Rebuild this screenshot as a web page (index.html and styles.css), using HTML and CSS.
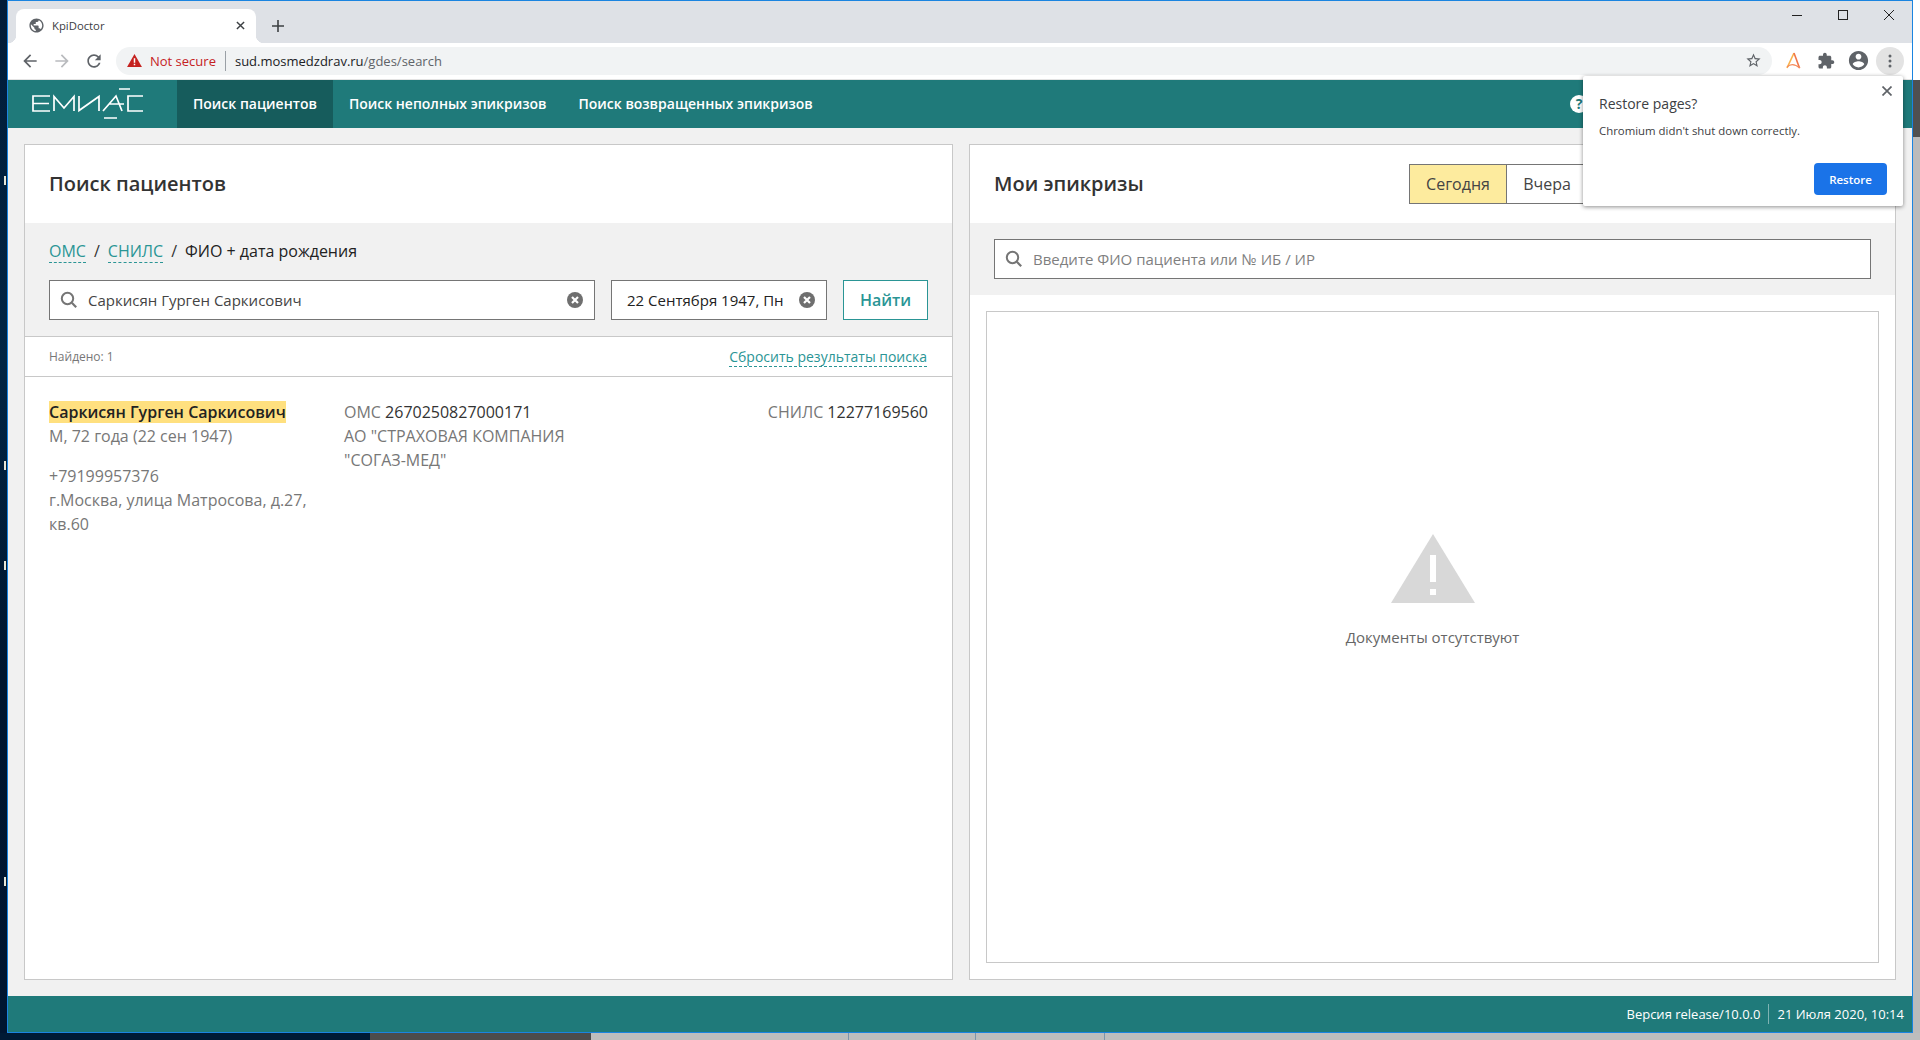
FILE: index.html
```html
<!DOCTYPE html>
<html lang="ru">
<head>
  <meta charset="UTF-8">
  <title>KpiDoctor</title>
  <link rel="stylesheet" href="styles.css">
</head>
<body>
  <svg class="defs" width="0" height="0">
    <symbol id="i-search" viewBox="0 0 20 20">
      <circle cx="8.5" cy="8.5" r="5.7" fill="none" stroke="#757575" stroke-width="2"/>
      <path d="M12.8 12.8l4.4 4.4" stroke="#757575" stroke-width="2.2" fill="none"/>
    </symbol>
    <symbol id="i-clear" viewBox="0 0 16 16">
      <circle cx="8" cy="8" r="8" fill="#6f6f6f"/>
      <path d="M5 5l6 6M11 5l-6 6" stroke="#fff" stroke-width="2.2" fill="none"/>
    </symbol>
  </svg>

  <div class="screen">
    <div class="desk-left">
      <span class="mark mark-a"></span>
      <span class="mark mark-b"></span>
      <span class="mark mark-c"></span>
      <span class="mark mark-d"></span>
    </div>

    <div class="window">
      <!-- вкладки -->
      <div class="tabstrip">
        <div class="tab">
          <svg class="favicon" viewBox="0 0 24 24"><path fill="#5f6368" d="M12 2C6.48 2 2 6.48 2 12s4.48 10 10 10 10-4.48 10-10S17.52 2 12 2zm-1 17.93c-3.95-.49-7-3.85-7-7.93 0-.62.08-1.21.21-1.79L9 15v1c0 1.1.9 2 2 2v1.93zm6.9-2.54c-.26-.81-1-1.39-1.9-1.39h-1v-3c0-.55-.45-1-1-1H8v-2h2c.55 0 1-.45 1-1V7h2c1.1 0 2-.9 2-2v-.41c2.93 1.19 5 4.06 5 7.41 0 2.08-.8 3.97-2.1 5.39z"/></svg>
          <span class="tab-title">KpiDoctor</span>
          <svg class="tab-close" viewBox="0 0 10 10"><path d="M1 1l8 8M9 1l-8 8" stroke="#3c4043" stroke-width="1.6" fill="none"/></svg>
        </div>
        <svg class="new-tab" viewBox="0 0 12 12"><path d="M6 0v12M0 6h12" stroke="#3c4043" stroke-width="1.6" fill="none"/></svg>
        <div class="win-controls">
          <div class="win-btn"><svg width="10" height="10" viewBox="0 0 10 10"><path d="M0 5.5h10" stroke="#222" fill="none"/></svg></div>
          <div class="win-btn"><svg width="10" height="10" viewBox="0 0 10 10"><rect x=".5" y=".5" width="9" height="9" stroke="#222" fill="none"/></svg></div>
          <div class="win-btn"><svg width="10" height="10" viewBox="0 0 10 10"><path d="M0 0l10 10M10 0L0 10" stroke="#222" fill="none"/></svg></div>
        </div>
      </div>

      <!-- адресная строка -->
      <div class="toolbar">
        <div class="tool-btn"><svg width="20" height="20" viewBox="0 0 24 24"><path fill="#5f6368" d="M20 11H7.83l5.59-5.59L12 4l-8 8 8 8 1.41-1.41L7.83 13H20v-2z"/></svg></div>
        <div class="tool-btn"><svg width="20" height="20" viewBox="0 0 24 24"><path fill="#b9bbbe" d="M4 11h12.17l-5.59-5.59L12 4l8 8-8 8-1.41-1.41L16.17 13H4v-2z"/></svg></div>
        <div class="tool-btn"><svg width="20" height="20" viewBox="0 0 24 24"><path fill="#5f6368" d="M17.65 6.35C16.2 4.9 14.21 4 12 4c-4.42 0-7.99 3.58-7.99 8s3.57 8 7.99 8c3.73 0 6.84-2.55 7.73-6h-2.08c-.82 2.33-3.04 4-5.65 4-3.31 0-6-2.69-6-6s2.69-6 6-6c1.66 0 3.14.69 4.22 1.78L13 11h7V4l-2.35 2.35z"/></svg></div>
        <div class="omnibox">
          <svg class="warn" viewBox="0 0 16 14"><path fill="#c5221f" d="M8 0l8 14H0z"/><path fill="#fff" d="M7.2 4.5h1.6v5H7.2zM7.2 10.5h1.6v1.6H7.2z"/></svg>
          <span class="not-secure">Not secure</span>
          <span class="omni-sep"></span>
          <span class="url">sud.mosmedzdrav.ru<span class="url-path">/gdes/search</span></span>
          <svg class="star" viewBox="0 0 24 24"><path fill="#5f6368" d="M22 9.24l-7.19-.62L12 2 9.19 8.63 2 9.24l5.46 4.73L5.82 21 12 17.27 18.18 21l-1.63-7.03L22 9.24zM12 15.4l-3.76 2.27 1-4.28-3.32-2.88 4.38-.38L12 6.1l1.71 4.04 4.38.38-3.32 2.88 1 4.28L12 15.4z"/></svg>
        </div>
        <div class="tool-right">
          <div class="tool-btn">
            <svg width="18" height="20" viewBox="0 0 18 20">
              <path d="M2 17L9 2" stroke="#f9b24a" stroke-width="1.6" fill="none"/>
              <path d="M9 2l5.5 15" stroke="#f0764a" stroke-width="1.6" fill="none"/>
              <path d="M2 16c4-4 8-3 13 1" stroke="#f48a5a" stroke-width="1.4" fill="none"/>
            </svg>
          </div>
          <div class="tool-btn"><svg width="18" height="18" viewBox="0 0 24 24"><path fill="#5f6368" d="M20.5 11H19V7c0-1.1-.9-2-2-2h-4V3.5C13 2.12 11.88 1 10.5 1S8 2.12 8 3.5V5H4c-1.1 0-1.99.9-1.99 2v3.8H3.5c1.49 0 2.7 1.21 2.7 2.7s-1.21 2.7-2.7 2.7H2V20c0 1.1.9 2 2 2h3.8v-1.5c0-1.49 1.21-2.7 2.7-2.7 1.49 0 2.7 1.21 2.7 2.7V22H17c1.1 0 2-.9 2-2v-4h1.5c1.38 0 2.5-1.12 2.5-2.5S21.88 11 20.5 11z"/></svg></div>
          <div class="tool-btn"><svg width="23" height="23" viewBox="0 0 24 24"><path fill="#5f6368" d="M12 2C6.48 2 2 6.48 2 12s4.48 10 10 10 10-4.48 10-10S17.52 2 12 2zm0 3c1.66 0 3 1.34 3 3s-1.34 3-3 3-3-1.34-3-3 1.34-3 3-3zm0 14.2c-2.5 0-4.71-1.28-6-3.22.03-1.99 4-3.08 6-3.08 1.99 0 5.97 1.09 6 3.08-1.29 1.94-3.5 3.22-6 3.22z"/></svg></div>
          <div class="tool-btn menu-btn"><svg width="4" height="14" viewBox="0 0 4 14"><circle cx="2" cy="2" r="1.5" fill="#5f6368"/><circle cx="2" cy="7" r="1.5" fill="#5f6368"/><circle cx="2" cy="12" r="1.5" fill="#5f6368"/></svg></div>
        </div>
      </div>

      <!-- страница -->
      <div class="page">
        <header class="app-header">
          <div class="brand">
            <svg width="130" height="40" viewBox="0 0 130 40" fill="none" stroke="#fff" stroke-width="1.7">
              <path d="M26 12H9v15h17M9 19.500h16"/>
              <path d="M30 27V12.500L40 24l10-11.500V27"/>
              <path d="M55 12v14.500L75 12.500V27"/>
              <path d="M79 27l13-15 6 15M85 20h15"/>
              <path d="M95 5h11M80 34h13"/>
              <path d="M119 12h-15v15h15"/>
            </svg>
          </div>
          <nav class="app-nav">
            <a class="nav-item active">Поиск пациентов</a>
            <a class="nav-item">Поиск неполных эпикризов</a>
            <a class="nav-item">Поиск возвращенных эпикризов</a>
          </nav>
          <span class="help">?</span>
        </header>

        <main class="columns">
          <section class="panel">
            <div class="panel-head">
              <h2>Поиск пациентов</h2>
            </div>
            <div class="search-block">
              <div class="crumbs">
                <a class="dash-link">ОМС</a>
                <span class="crumb-sep">/</span>
                <a class="dash-link">СНИЛС</a>
                <span class="crumb-sep">/</span>
                <span class="crumb-current">ФИО + дата рождения</span>
              </div>
              <div class="search-row">
                <div class="field field-name">
                  <svg class="field-icon"><use href="#i-search"/></svg>
                  <input class="field-input" value="Саркисян Гурген Саркисович" readonly>
                  <svg class="field-clear"><use href="#i-clear"/></svg>
                </div>
                <div class="field field-date">
                  <input class="field-input" value="22 Сентября 1947, Пн" readonly>
                  <svg class="field-clear"><use href="#i-clear"/></svg>
                </div>
                <button class="find-btn">Найти</button>
              </div>
            </div>
            <div class="found-bar">
              <span class="found">Найдено: 1</span>
              <a class="dash-link reset">Сбросить результаты поиска</a>
            </div>
            <div class="patient">
              <div class="patient-main">
                <p><mark class="name">Саркисян Гурген Саркисович</mark></p>
                <p>М, 72 года (22 сен 1947)</p>
                <p class="gap-top">+79199957376</p>
                <p>г.Москва, улица Матросова, д.27, кв.60</p>
              </div>
              <div class="patient-oms">
                <p>ОМС <b>2670250827000171</b></p>
                <p>АО "СТРАХОВАЯ КОМПАНИЯ "СОГАЗ-МЕД"</p>
              </div>
              <div class="patient-snils">
                <p>СНИЛС <b>12277169560</b></p>
              </div>
            </div>
          </section>

          <section class="panel">
            <div class="panel-head">
              <h2>Мои эпикризы</h2>
              <div class="periods">
                <span class="period selected">Сегодня</span>
                <span class="period">Вчера</span>
              </div>
            </div>
            <div class="filter-block">
              <div class="field">
                <svg class="field-icon"><use href="#i-search"/></svg>
                <input class="field-input" placeholder="Введите ФИО пациента или № ИБ / ИР" readonly>
              </div>
            </div>
            <div class="docs">
              <svg class="docs-icon" width="84" height="70" viewBox="0 0 84 70">
                <path fill="#d8d8d8" d="M42 0l42 69H0z"/>
                <path fill="#fff" d="M39 21h6v27h-6zM39 55h6v6h-6z"/>
              </svg>
              <p class="docs-empty">Документы отсутствуют</p>
            </div>
          </section>
        </main>

        <footer class="app-footer">
          <span>Версия release/10.0.0</span>
          <span class="foot-sep"></span>
          <span>21 Июля 2020, 10:14</span>
        </footer>

        <div class="restore">
          <svg class="restore-close" width="10" height="10" viewBox="0 0 10 10"><path d="M.5.500l9 9M9.500.500l-9 9" stroke="#5f6368" stroke-width="1.700" fill="none"/></svg>
          <div class="restore-title">Restore pages?</div>
          <div class="restore-text">Chromium didn't shut down correctly.</div>
          <div class="restore-actions"><button class="restore-btn">Restore</button></div>
        </div>
      </div>
    </div>

    <div class="desk-right">
      <div class="dr-top"></div>
      <div class="dr-mid"></div>
      <div class="dr-low"></div>
    </div>
  </div>

  <div class="taskbar">
    <div class="tb-desk"></div>
    <div class="tb-dark"></div>
    <div class="tb-item tb-w1"></div>
    <div class="tb-item tb-w2"></div>
    <div class="tb-item tb-w3"></div>
    <div class="tb-item tb-rest"></div>
  </div>
</body>
</html>
```

FILE: styles.css
```css
* {
  box-sizing: border-box;
}

html, body {
  margin: 0;
  height: 1040px;
  overflow: hidden;
}

body {
  font-family: "Open Sans", "Noto Sans", sans-serif;
  font-size: 16px;
  color: #333;
  background-color: #001a35;
}

p, h2 {
  margin: 0;
}

.defs {
  position: absolute;
}

.screen {
  display: flex;
  height: 1033px;
}

/* полоски рабочего стола по краям окна */
.desk-left {
  position: relative;
  width: 7px;
  background: linear-gradient(180deg, #021c38 0%, #012544 35%, #00162f 65%, #001530 100%);
}

.mark {
  position: absolute;
  left: 4px;
  width: 2px;
  height: 9px;
  background-color: #e6e6d8;
}

.mark-a { top: 176px; }
.mark-b { top: 461px; }
.mark-c { top: 561px; }
.mark-d { top: 877px; }

.desk-right {
  display: flex;
  flex-direction: column;
  width: 7px;
}

.dr-top { height: 80px; background-color: #fff; }
.dr-mid { height: 57px; background-color: #505050; }
.dr-low { flex: 1; background-color: #bbb; }

.window {
  position: relative;
  display: flex;
  flex-direction: column;
  width: 1906px;
  border: 1px solid #1a84e0;
}

.tabstrip {
  display: flex;
  align-items: flex-end;
  height: 42px;
  padding-left: 8px;
  background-color: #dee1e6;
}

.tab {
  position: relative;
  display: flex;
  align-items: center;
  width: 240px;
  height: 34px;
  padding: 0 11px 1px 12px;
  background-color: #fff;
  border-radius: 8px 8px 0 0;
  font-size: 11.300px;
  color: #3c4043;
}

.tab::before,
.tab::after {
  content: "";
  position: absolute;
  bottom: 0;
  width: 8px;
  height: 8px;
}

.tab::before {
  left: -8px;
  background: radial-gradient(circle at 0 0, transparent 8px, #fff 8.5px);
}

.tab::after {
  right: -8px;
  background: radial-gradient(circle at 100% 0, transparent 8px, #fff 8.5px);
}

.favicon {
  width: 17px;
  height: 17px;
  margin-right: 7px;
}

.tab-title {
  flex: 1;
}

.tab-close {
  width: 9px;
  height: 9px;
}

.new-tab {
  width: 12px;
  height: 12px;
  margin: 0 0 11px 16px;
}

.win-controls {
  display: flex;
  align-self: flex-start;
  margin-left: auto;
}

.win-btn {
  display: flex;
  align-items: center;
  justify-content: center;
  width: 46px;
  height: 28px;
}

.toolbar {
  display: flex;
  align-items: center;
  height: 37px;
  padding: 0 8px 1px 6px;
  background-color: #fff;
  border-bottom: 1px solid #e3e3e3;
}

.tool-btn {
  display: flex;
  align-items: center;
  justify-content: center;
  width: 32px;
  height: 28px;
}

.omnibox {
  display: flex;
  align-items: center;
  flex: 1;
  height: 28px;
  margin-left: 6px;
  padding: 0 10px 0 11px;
  background-color: #f1f3f4;
  border-radius: 14px;
  font-size: 13px;
}

.warn {
  width: 15px;
  height: 13px;
}

.not-secure {
  margin-left: 8px;
  color: #c5221f;
}

.omni-sep {
  width: 1px;
  height: 20px;
  margin: 0 9px;
  background-color: #9aa0a6;
}

.url {
  color: #202124;
}

.url-path {
  color: #5f6368;
}

.star {
  width: 17px;
  height: 17px;
  margin-left: auto;
}

.tool-right {
  display: flex;
  margin-left: 6px;
}

.menu-btn {
  background-color: #e3e3e3;
  border-radius: 50%;
  width: 28px;
  margin-left: 2px;
}

.page {
  position: relative;
  display: flex;
  flex-direction: column;
  flex: 1;
  min-height: 0;
  background-color: #f1f1f1;
}

.app-header {
  display: flex;
  align-items: stretch;
  height: 48px;
  background-color: #1f7a7a;
}

.brand {
  display: flex;
  align-items: center;
  width: 169px;
  padding-left: 16px;
}

.app-nav {
  display: flex;
}

.nav-item {
  display: flex;
  align-items: center;
  padding: 0 16px 2px;
  font-size: 14px;
  font-weight: 600;
  color: #fff;
}

.nav-item.active {
  background-color: #165c5c;
}

.help {
  align-self: center;
  width: 18px;
  height: 18px;
  margin: 0 324px 0 auto;
  border-radius: 50%;
  background-color: #fff;
  color: #1f7a7a;
  font-size: 14px;
  font-weight: 700;
  line-height: 18px;
  text-align: center;
}

.columns {
  display: grid;
  grid-template-columns: 929px 1fr;
  gap: 16px;
  flex: 1;
  min-height: 0;
  padding: 16px 16px 16px 16px;
}

.panel {
  display: flex;
  flex-direction: column;
  background-color: #fff;
  border: 1px solid #c8c8c8;
}

.panel-head {
  display: flex;
  align-items: center;
  justify-content: space-between;
  height: 78px;
  padding: 0 24px;
  flex-shrink: 0;
}

.panel-head h2 {
  margin-bottom: 2px;
  font-size: 20px;
  font-weight: 600;
  color: #333;
}

.search-block {
  padding: 16px 24px;
  background-color: #f1f1f1;
  border-bottom: 1px solid #c8c8c8;
}

.crumbs {
  display: flex;
  align-items: center;
  height: 24px;
  margin-bottom: 17px;
}

.crumb-sep {
  margin: 0 8px;
  color: #333;
}

.crumb-current {
  color: #222;
}

.dash-link {
  color: #2a9595;
  border-bottom: 1px dashed #2a9595;
  line-height: 22px;
}

.search-row {
  display: flex;
  gap: 16px;
}

.field {
  display: flex;
  align-items: center;
  height: 40px;
  padding: 0 8px 0 9px;
  background-color: #fff;
  border: 1px solid #757575;
}

.field-name {
  flex: 1;
}

.field-date {
  width: 216px;
  padding-left: 0;
}

.field-icon {
  width: 20px;
  height: 20px;
  margin-right: 9px;
  flex-shrink: 0;
}

.field-clear {
  width: 16px;
  height: 16px;
  flex-shrink: 0;
  margin-left: 8px;
  margin-right: 3px;
}

.field-input {
  flex: 1;
  min-width: 0;
  height: 100%;
  padding: 0;
  border: none;
  outline: none;
  background: none;
  font-family: inherit;
  font-size: 15px;
  color: #444;
}

.field-date .field-input {
  padding-left: 15px;
  color: #222;
}

.field-input::placeholder {
  color: #7f7f7f;
}

.find-btn {
  width: 85px;
  height: 40px;
  padding: 0;
  background-color: #fff;
  border: 1px solid #2a9595;
  font-family: inherit;
  font-size: 16px;
  font-weight: 600;
  color: #2a9595;
}

.found-bar {
  display: flex;
  align-items: center;
  justify-content: space-between;
  height: 40px;
  padding: 0 25px 0 24px;
  border-bottom: 1px solid #c8c8c8;
}

.found {
  font-size: 12px;
  color: #777;
}

.reset {
  font-size: 14px;
  line-height: 19px;
}

.patient {
  display: flex;
  padding: 23px 24px;
  line-height: 24px;
  color: #777;
}

.patient b {
  font-weight: 400;
  color: #333;
}

.patient-main {
  width: 295px;
  padding-right: 24px;
}

.gap-top {
  margin-top: 16px;
}

.name {
  font-weight: 600;
  color: #222;
  background-color: #ffe07f;
}

.patient-oms {
  width: 250px;
}

.patient-snils {
  margin-left: auto;
}

.periods {
  display: flex;
  margin-right: 283px;
}

.period {
  display: flex;
  align-items: center;
  justify-content: center;
  width: 82px;
  height: 40px;
  margin-left: -1px;
  background-color: #fff;
  border: 1px solid #757575;
  color: #444;
}

.period.selected {
  width: 98px;
  background-color: #fdeb9e;
}

.filter-block {
  padding: 16px 24px;
  background-color: #f1f1f1;
  flex-shrink: 0;
}

.docs {
  display: flex;
  flex-direction: column;
  align-items: center;
  flex: 1;
  min-height: 0;
  margin: 16px;
  padding-top: 222px;
  background-color: #fff;
  border: 1px solid #c8c8c8;
}

.docs-empty {
  margin-top: 23px;
  font-size: 15px;
  color: #666;
}

.app-footer {
  display: flex;
  align-items: center;
  justify-content: flex-end;
  height: 36px;
  padding-right: 8px;
  background-color: #1f7a7a;
  font-size: 13px;
  color: #fff;
}

.foot-sep {
  width: 1px;
  height: 20px;
  margin: 0 8px;
  background-color: #7fb3b3;
}

/* всплывающее окно браузера поверх страницы */
.restore {
  position: absolute;
  top: -4px;
  left: 1575px;
  width: 320px;
  height: 130px;
  padding: 18px 16px 0;
  background-color: #fff;
  border-radius: 2px;
  box-shadow: 0 1px 4px rgba(0, 0, 0, 0.45);
}

.restore-close {
  position: absolute;
  top: 10px;
  right: 11px;
}

.restore-title {
  font-size: 14px;
  color: #3c4043;
}

.restore-text {
  margin-top: 10px;
  font-size: 11.400px;
  color: #3c4043;
}

.restore-actions {
  display: flex;
  justify-content: flex-end;
  margin-top: 25px;
}

.restore-btn {
  width: 73px;
  height: 32px;
  padding: 0;
  background-color: #1a73e8;
  border: none;
  border-radius: 4px;
  font-family: inherit;
  font-size: 11.500px;
  font-weight: 600;
  color: #fff;
}

.taskbar {
  display: flex;
  height: 7px;
}

.tb-desk { width: 370px; background-color: #001a35; }
.tb-dark { width: 221px; background-color: #4c4c4c; }
.tb-item { background-color: #bdbdbd; border-right: 1px solid #7d94ab; }
.tb-w1 { width: 258px; }
.tb-w2 { width: 127px; }
.tb-w3 { width: 129px; }
.tb-rest { flex: 1; border-right: none; }
```
